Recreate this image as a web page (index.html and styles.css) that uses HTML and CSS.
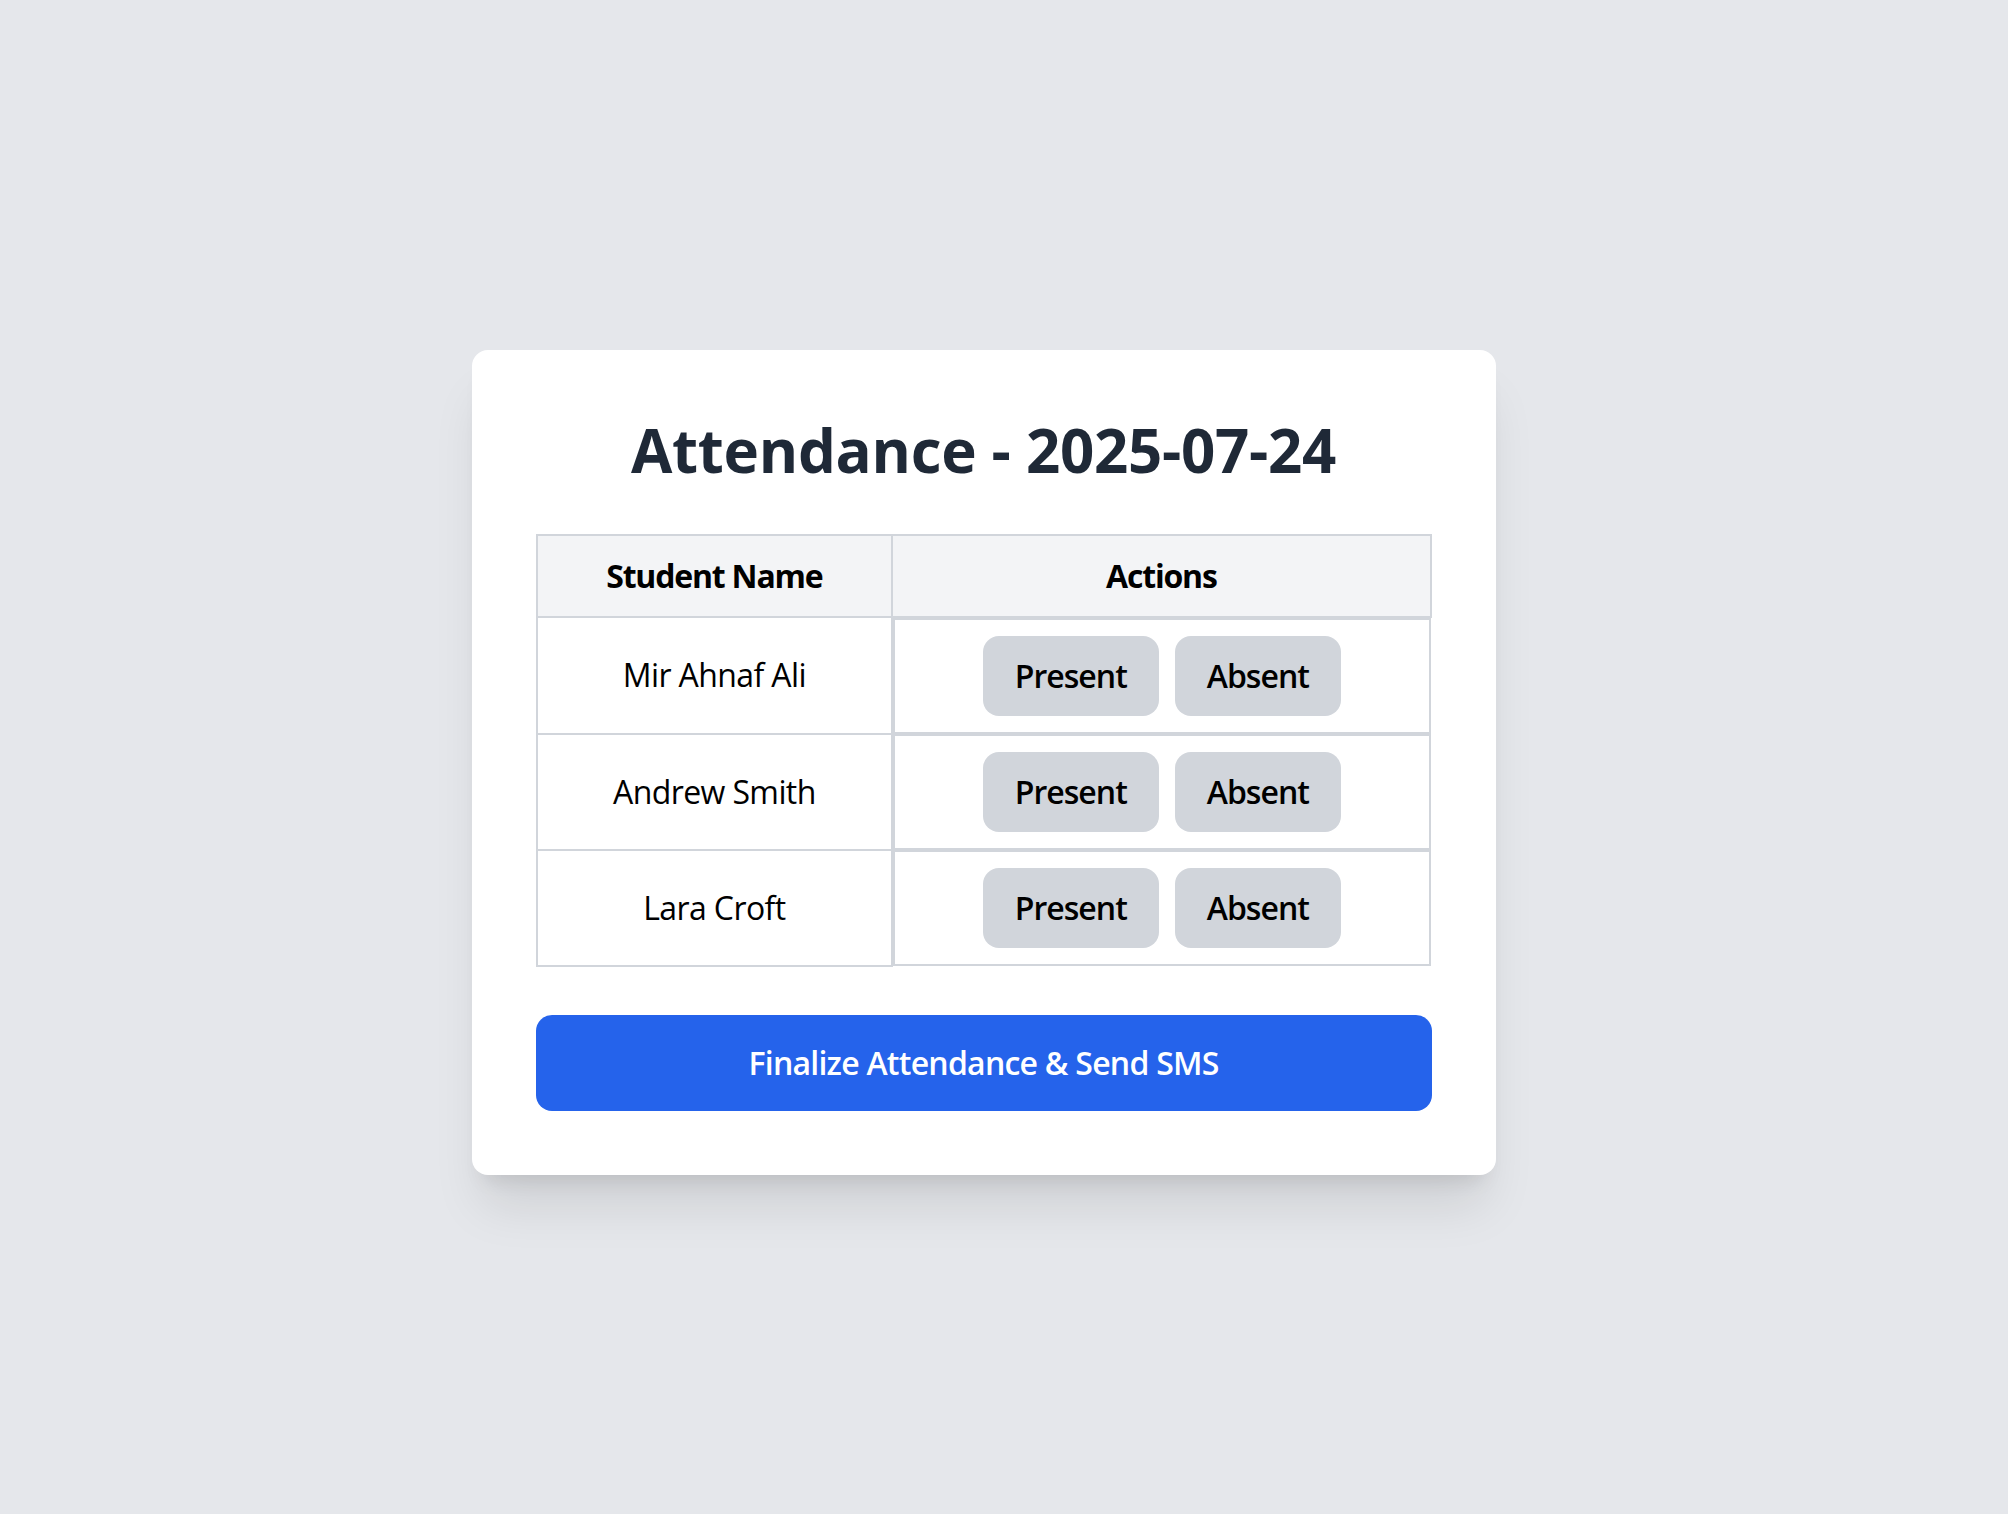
FILE: index.html
```html
<!DOCTYPE html>
<html lang="en">
<head>
<meta charset="utf-8">
<title>Attendance</title>
<link rel="stylesheet" href="styles.css">
</head>
<body>
<div class="page">
  <div class="card">
    <h1 class="title">Attendance - 2025-07-24</h1>
    <table class="sheet">
      <thead>
        <tr>
          <th class="cell head">Student Name</th>
          <th class="cell head">Actions</th>
        </tr>
      </thead>
      <tbody>
        <tr>
          <td class="cell name">Mir Ahnaf Ali</td>
          <td class="cell actions"><button class="btn-mark">Present</button><button class="btn-mark">Absent</button></td>
        </tr>
        <tr>
          <td class="cell name">Andrew Smith</td>
          <td class="cell actions"><button class="btn-mark">Present</button><button class="btn-mark">Absent</button></td>
        </tr>
        <tr>
          <td class="cell name">Lara Croft</td>
          <td class="cell actions"><button class="btn-mark">Present</button><button class="btn-mark">Absent</button></td>
        </tr>
      </tbody>
    </table>
    <button class="finalize">Finalize Attendance &amp; Send SMS</button>
  </div>
</div>
</body>
</html>
```

FILE: styles.css
```css
html, body {
  margin: 0;
  padding: 0;
}

body {
  background: #e5e7eb;
  font-family: "Open Sans", "Noto Sans", "Liberation Sans", sans-serif;
  color: #000;
}

.page {
  display: flex;
  align-items: center;
  justify-content: center;
  min-height: 1514px;
  box-sizing: border-box;
  padding: 10px 41px 0 0;
}

.card {
  width: 1024px;
  box-sizing: border-box;
  background: #ffffff;
  padding: 64px;
  border-radius: 16px;
  box-shadow: 0 40px 50px -10px rgba(0, 0, 0, 0.1), 0 16px 20px -12px rgba(0, 0, 0, 0.1);
}

.title {
  margin: 0 0 48px;
  font-size: 60px;
  line-height: 72px;
  font-weight: 700;
  letter-spacing: -0.3px;
  text-align: center;
  color: #1f2937;
}

.sheet {
  width: 100%;
  border-collapse: collapse;
  font-size: 32px;
  line-height: 48px;
}

.cell {
  border: 2px solid #d1d5db;
  padding: 16px 32px;
  text-align: center;
}

.head {
  background: #f3f4f6;
  font-weight: 700;
  letter-spacing: -1.2px;
}

.name {
  font-weight: 400;
  letter-spacing: -0.6px;
}

.actions {
  display: flex;
  justify-content: center;
  gap: 16px;
}

.btn-mark {
  border: none;
  margin: 0;
  background: #d1d5db;
  color: #000;
  border-radius: 16px;
  padding: 16px 32px;
  font-family: inherit;
  font-size: 32px;
  line-height: 48px;
  font-weight: 600;
  letter-spacing: -1px;
  cursor: pointer;
}

.finalize {
  display: block;
  width: 100%;
  margin: 48px 0 0;
  border: none;
  background: #2563eb;
  color: #ffffff;
  border-radius: 16px;
  padding: 24px 32px;
  font-family: inherit;
  font-size: 32px;
  line-height: 48px;
  font-weight: 600;
  letter-spacing: -0.75px;
  cursor: pointer;
}
```
